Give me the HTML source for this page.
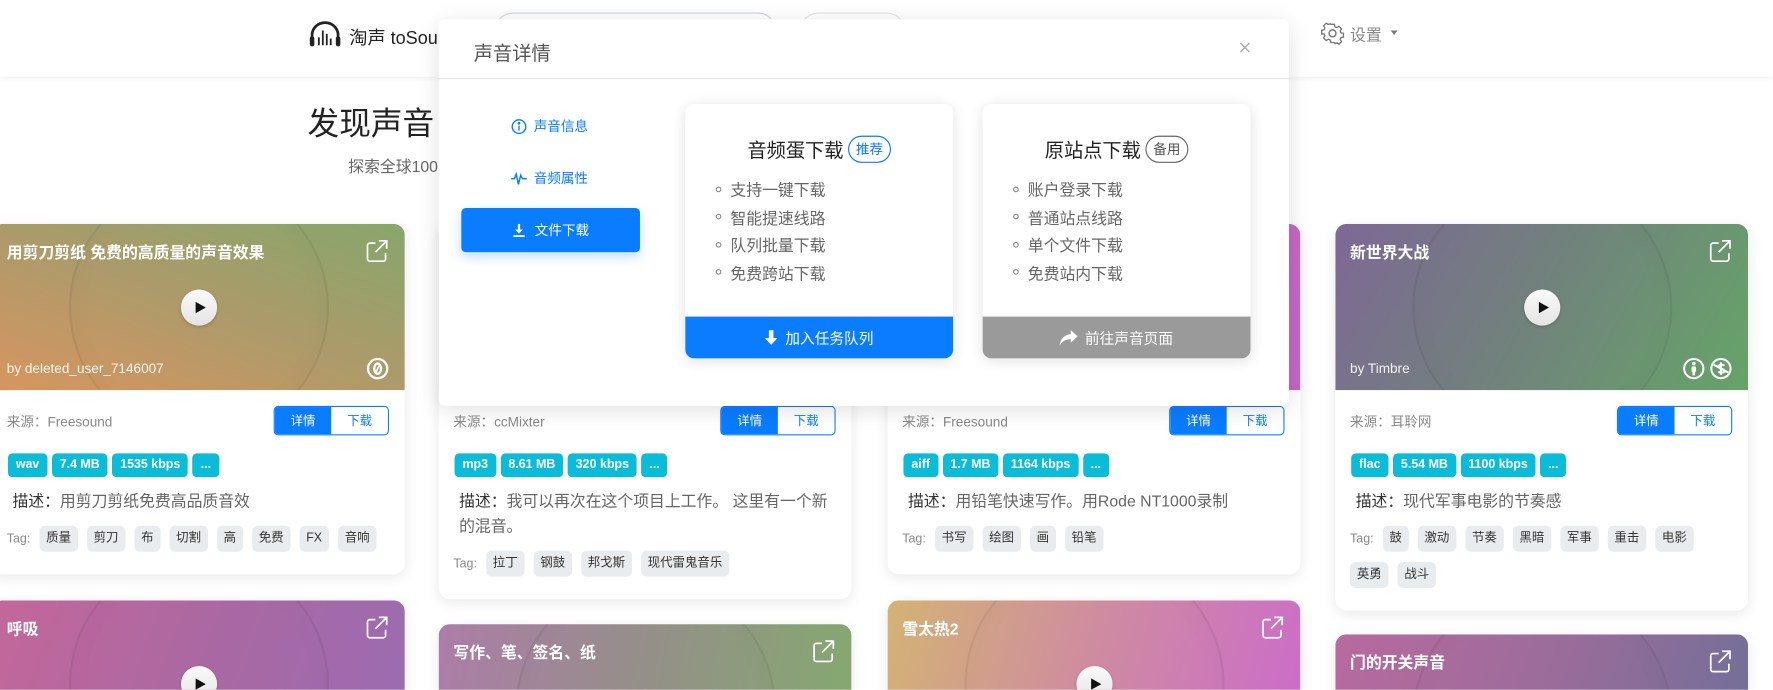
<!DOCTYPE html>
<html><head><meta charset="utf-8">
<style>
*{box-sizing:border-box;margin:0;padding:0}
html,body{width:1773px;height:689px;overflow:hidden;background:#fff}
body{font-family:"Liberation Sans","Noto Sans CJK SC",sans-serif;color:#333}
#w{position:absolute;left:0;top:0;width:1568px;height:610px;transform:scale(1.1307);transform-origin:0 0;background:#fff;overflow:hidden}
.abs{position:absolute}
.hdr{left:0;top:0;width:1568px;height:68px;background:#fff;box-shadow:0 1px 4px rgba(0,0,0,.07)}
.card{position:absolute;width:365px;background:#fff;border-radius:10px;box-shadow:0 3px 12px rgba(0,0,0,.09);overflow:hidden}
.img{position:relative;height:147px;overflow:hidden}
.img .disc{position:absolute;left:50%;top:50%;width:230px;height:230px;margin:-115px 0 0 -115px;border-radius:50%;border:2px solid rgba(0,0,0,.06);background:radial-gradient(circle,rgba(255,255,255,0) 60%,rgba(0,0,0,.04) 100%)}
.img .ttl{position:absolute;left:13px;top:15px;color:#fff;font-weight:bold;font-size:14px;line-height:20px}
.img .by{position:absolute;left:13px;top:121px;color:rgba(255,255,255,.9);font-size:12px}
.img .ext{position:absolute;right:14px;top:14px}
.img .play{position:absolute;left:50%;top:50%;width:32px;height:32px;margin:-16px 0 0 -16px;border-radius:50%;background:linear-gradient(#fafafa,#e4e4e4);box-shadow:0 1px 3px rgba(0,0,0,.2)}
.img .play:after{content:"";position:absolute;left:13px;top:11px;border-left:9px solid #111;border-top:5px solid transparent;border-bottom:5px solid transparent}
.lic{position:absolute;top:118px;right:14px;display:flex;gap:4px}
.bd{padding:14px 14px 20px 13px}
.r1{display:flex;justify-content:space-between;align-items:center;height:26px}
.src{font-size:12px;color:#888}
.bg{display:flex;border:1px solid #0a7cff;border-radius:4px;overflow:hidden;height:26px;width:102px}
.bg span{flex:1;font-size:11px;display:flex;align-items:center;justify-content:center}
.bg .a{background:#0a7cff;color:#fff}.bg .b{color:#0a7cff;background:#fff}
.chips{display:flex;gap:4px;margin-top:16px;margin-left:1px}
.chips span{background:#0bbcd8;color:#fff;font-weight:bold;font-size:11px;height:21px;line-height:21px;padding:0 7px;border-radius:4px}
.desc{margin-top:10px;padding-left:5px;font-size:14px;line-height:22px;color:#666}
.desc b{font-weight:normal;color:#333}
.tags{margin-top:11px;display:flex;flex-wrap:wrap;gap:9px 8px;align-items:center;font-size:11px}
.tags .t{color:#888;margin-right:0}
.tags span.p{background:#e9ecef;border-radius:5px;height:23px;line-height:23px;padding:0 6px;color:#333}
.modal{left:388px;top:17px;width:752px;height:342px;background:#fff;border-radius:6px;box-shadow:0 4px 20px rgba(0,0,0,.12)}
.mh{height:53px;border-bottom:1px solid #e5e5e5;position:relative}
.nav{position:absolute;font-size:12px;color:#0a7cff;display:flex;align-items:center;gap:6px}
.dc{position:absolute;top:75px;width:237px;height:225px;background:#fff;border-radius:8px;box-shadow:0 2px 12px rgba(0,0,0,.12);overflow:hidden}
.dc h3{position:absolute;top:27px;left:0;width:100%;text-align:center;font-weight:normal;font-size:17px;color:#222;display:flex;justify-content:center;align-items:center;gap:4px}
.pill{font-size:12px;border:1px solid;border-radius:14px;padding:0 6px;height:24px;line-height:22px}
.dc ul{position:absolute;left:27px;top:64px;list-style:none}
.dc li{font-size:14px;color:#666;height:24.5px;line-height:24.5px}
.dc li:before{content:"";display:inline-block;width:3px;height:3px;border:1px solid #888;border-radius:50%;margin-right:8px;vertical-align:middle;position:relative;top:-2px}
.bar{position:absolute;left:0;bottom:0;width:100%;height:37px;color:#fff;font-size:13px;display:flex;align-items:center;justify-content:center;gap:6px}
</style></head><body><div id="w">

<div class="abs hdr">
  <svg class="abs" style="left:273px;top:18px" width="29" height="24" viewBox="0 0 29 24"><path d="M3 18 V13 A11.5 11 0 0 1 26 13 V18" fill="none" stroke="#222" stroke-width="2.4"/><rect x="1" y="14" width="4" height="9" rx="2" fill="#222"/><rect x="24" y="14" width="4" height="9" rx="2" fill="#222"/><g stroke="#222" stroke-width="1.6"><line x1="9" y1="15" x2="9" y2="22"/><line x1="12.5" y1="9" x2="12.5" y2="22"/><line x1="16" y1="12" x2="16" y2="22"/><line x1="19.5" y1="16" x2="19.5" y2="22"/></g></svg>
  <div class="abs" style="left:309px;top:20px;font-size:16px;color:#222">淘声 toSound</div>
  <div class="abs" style="left:437px;top:11px;width:250px;height:34px;border:1px solid #c9d6e2;border-radius:17px"></div>
  <div class="abs" style="left:707px;top:11px;width:94px;height:34px;border:1px solid #e3e3e3;border-radius:17px"></div>
  <svg class="abs" style="left:1168px;top:19px" width="21" height="21" viewBox="0 0 24 24" fill="none" stroke="#777" stroke-width="1.5"><path d="M10 2h4l.6 2.7 2 .9 2.4-1.4 2.8 2.8-1.4 2.4.9 2 2.7.6v4l-2.7.6-.9 2 1.4 2.4-2.8 2.8-2.4-1.4-2 .9L14 22h-4l-.6-2.7-2-.9-2.4 1.4-2.8-2.8 1.4-2.4-.9-2L0 12.6v-4l2.7-.6.9-2-1.4-2.4L5 .8l2.4 1.4 2-.9z" transform="translate(1 1) scale(.92)"/><circle cx="12" cy="12" r="3.5"/></svg>
  <div class="abs" style="left:1194px;top:21px;font-size:14px;color:#888">设置</div>
  <div class="abs" style="left:1230px;top:27px;border-top:4px solid #777;border-left:3.5px solid transparent;border-right:3.5px solid transparent"></div>
</div>

<div class="abs" style="left:272px;top:88px;font-size:28px;color:#222">发现声音</div>
<div class="abs" style="left:308px;top:137px;font-size:14px;color:#666">探索全球100</div>

<div class="card" style="left:-7px;top:198px">
  <div class="img" style="background:linear-gradient(20deg,#d8955f 0%,#ad9a6a 50%,#87a66b 100%)"><div class="disc"></div><div class="ttl">用剪刀剪纸 免费的高质量的声音效果</div>
  <svg class="ext" width="21" height="21" viewBox="0 0 21 21" fill="none" stroke="#fff" stroke-width="1.5"><path d="M9 3H4a2 2 0 0 0-2 2v12a2 2 0 0 0 2 2h12a2 2 0 0 0 2-2v-5"/><path d="M12 1h7v7M19 1 9 11"/></svg>
  <div class="play"></div><div class="by">by deleted_user_7146007</div>
  <div class="lic"><svg width="20" height="20" viewBox="0 0 20 20"><circle cx="10" cy="10" r="8.5" fill="none" stroke="#fff" stroke-width="2"/><ellipse cx="10" cy="10" rx="3" ry="4.5" fill="none" stroke="#fff" stroke-width="2"/><line x1="8" y1="14" x2="12" y2="6" stroke="#fff" stroke-width="1.5"/></svg></div></div>
  <div class="bd"><div class="r1"><span class="src">来源：Freesound</span><div class="bg"><span class="a">详情</span><span class="b">下载</span></div></div>
  <div class="chips"><span>wav</span><span>7.4 MB</span><span>1535 kbps</span><span>...</span></div>
  <div class="desc"><b>描述：</b>用剪刀剪纸免费高品质音效</div>
  <div class="tags"><span class="t">Tag:</span><span class="p">质量</span><span class="p">剪刀</span><span class="p">布</span><span class="p">切割</span><span class="p">高</span><span class="p">免费</span><span class="p">FX</span><span class="p">音响</span></div></div>
</div>
<div class="card" style="left:-7px;top:531px;height:120px">
  <div class="img" style="background:linear-gradient(110deg,#c4679a 0%,#aa68a2 50%,#9a6cb3 100%)"><div class="disc"></div><div class="ttl">呼吸</div>
  <svg class="ext" width="21" height="21" viewBox="0 0 21 21" fill="none" stroke="#fff" stroke-width="1.5"><path d="M9 3H4a2 2 0 0 0-2 2v12a2 2 0 0 0 2 2h12a2 2 0 0 0 2-2v-5"/><path d="M12 1h7v7M19 1 9 11"/></svg><div class="play"></div></div>
</div>

<div class="card" style="left:388px;top:198px">
  <div class="img" style="background:linear-gradient(110deg,#b077a8,#8aa46c)"><div class="disc"></div></div>
  <div class="bd"><div class="r1"><span class="src">来源：ccMixter</span><div class="bg"><span class="a">详情</span><span class="b">下载</span></div></div>
  <div class="chips"><span>mp3</span><span>8.61 MB</span><span>320 kbps</span><span>...</span></div>
  <div class="desc"><b>描述：</b>我可以再次在这个项目上工作。 这里有一个新的混音。</div>
  <div class="tags"><span class="t">Tag:</span><span class="p">拉丁</span><span class="p">钢鼓</span><span class="p">邦戈斯</span><span class="p">现代雷鬼音乐</span></div></div>
</div>
<div class="card" style="left:388px;top:552px;height:120px">
  <div class="img" style="background:linear-gradient(100deg,#ac7ca8 0%,#949088 50%,#84aa6e 100%)"><div class="disc"></div><div class="ttl">写作、笔、签名、纸</div>
  <svg class="ext" width="21" height="21" viewBox="0 0 21 21" fill="none" stroke="#fff" stroke-width="1.5"><path d="M9 3H4a2 2 0 0 0-2 2v12a2 2 0 0 0 2 2h12a2 2 0 0 0 2-2v-5"/><path d="M12 1h7v7M19 1 9 11"/></svg><div class="play"></div></div>
</div>

<div class="card" style="left:785px;top:198px">
  <div class="img" style="background:linear-gradient(110deg,#b878b0,#c466c8)"><div class="disc"></div></div>
  <div class="bd"><div class="r1"><span class="src">来源：Freesound</span><div class="bg"><span class="a">详情</span><span class="b">下载</span></div></div>
  <div class="chips"><span>aiff</span><span>1.7 MB</span><span>1164 kbps</span><span>...</span></div>
  <div class="desc"><b>描述：</b>用铅笔快速写作。用Rode NT1000录制</div>
  <div class="tags"><span class="t">Tag:</span><span class="p">书写</span><span class="p">绘图</span><span class="p">画</span><span class="p">铅笔</span></div></div>
</div>
<div class="card" style="left:785px;top:531px;height:120px">
  <div class="img" style="background:linear-gradient(105deg,#d4b374 0%,#ce8aa2 50%,#cc6acc 100%)"><div class="disc"></div><div class="ttl">雪太热2</div>
  <svg class="ext" width="21" height="21" viewBox="0 0 21 21" fill="none" stroke="#fff" stroke-width="1.5"><path d="M9 3H4a2 2 0 0 0-2 2v12a2 2 0 0 0 2 2h12a2 2 0 0 0 2-2v-5"/><path d="M12 1h7v7M19 1 9 11"/></svg><div class="play"></div></div>
</div>

<div class="card" style="left:1181px;top:198px">
  <div class="img" style="background:linear-gradient(120deg,#7e6896 0%,#72807e 45%,#66a468 100%)"><div class="disc"></div><div class="ttl">新世界大战</div>
  <svg class="ext" width="21" height="21" viewBox="0 0 21 21" fill="none" stroke="#fff" stroke-width="1.5"><path d="M9 3H4a2 2 0 0 0-2 2v12a2 2 0 0 0 2 2h12a2 2 0 0 0 2-2v-5"/><path d="M12 1h7v7M19 1 9 11"/></svg>
  <div class="play"></div><div class="by">by Timbre</div>
  <div class="lic"><svg width="20" height="20" viewBox="0 0 20 20"><circle cx="10" cy="10" r="8.5" fill="none" stroke="#fff" stroke-width="1.8"/><circle cx="10" cy="5.5" r="1.6" fill="#fff"/><rect x="8" y="8" width="4" height="5" rx="1" fill="#fff"/><rect x="8.8" y="12" width="2.4" height="4" fill="#fff"/></svg><svg width="20" height="20" viewBox="0 0 20 20" fill="none" stroke="#fff" stroke-width="1.8"><circle cx="10" cy="10" r="8.5"/><path d="M13 7.5c-1-1.2-5-1.4-5 .8 0 2.5 5 1.2 5 3.6 0 2.2-4 2-5.2.6M10 4.5v11M3.5 6.5l13 7"/></svg></div></div>
  <div class="bd"><div class="r1"><span class="src">来源：耳聆网</span><div class="bg"><span class="a">详情</span><span class="b">下载</span></div></div>
  <div class="chips"><span>flac</span><span>5.54 MB</span><span>1100 kbps</span><span>...</span></div>
  <div class="desc"><b>描述：</b>现代军事电影的节奏感</div>
  <div class="tags"><span class="t">Tag:</span><span class="p">鼓</span><span class="p">激动</span><span class="p">节奏</span><span class="p">黑暗</span><span class="p">军事</span><span class="p">重击</span><span class="p">电影</span><span class="p">英勇</span><span class="p">战斗</span></div></div>
</div>
<div class="card" style="left:1181px;top:561px;height:120px">
  <div class="img" style="background:linear-gradient(110deg,#b86a9e 0%,#9a6c9a 50%,#6c7098 100%)"><div class="disc"></div><div class="ttl">门的开关声音</div>
  <svg class="ext" width="21" height="21" viewBox="0 0 21 21" fill="none" stroke="#fff" stroke-width="1.5"><path d="M9 3H4a2 2 0 0 0-2 2v12a2 2 0 0 0 2 2h12a2 2 0 0 0 2-2v-5"/><path d="M12 1h7v7M19 1 9 11"/></svg><div class="play"></div></div>
</div>

<div class="abs modal">
  <div class="mh"><div class="abs" style="left:31px;top:16px;font-size:17px;color:#555">声音详情</div>
  <svg class="abs" style="left:708px;top:20px" width="10" height="10" viewBox="0 0 10 10" stroke="#aaa" stroke-width="1.3"><path d="M1 1l8 8M9 1 1 9"/></svg></div>
  <div class="nav" style="left:64px;top:86px"><svg width="14" height="14" viewBox="0 0 14 14" fill="none" stroke="#0a7cff" stroke-width="1.2"><circle cx="7" cy="7" r="6"/><path d="M7 6v4.5"/><circle cx="7" cy="4" r=".6" fill="#0a7cff"/></svg>声音信息</div>
  <div class="nav" style="left:64px;top:132px"><svg width="14" height="14" viewBox="0 0 14 14" fill="none" stroke="#0a7cff" stroke-width="1.3"><path d="M0 7h3l1.5-4 2 9 2-8 1.5 3H14"/></svg>音频属性</div>
  <div class="abs" style="left:20px;top:167px;width:158px;height:39px;background:#0a7cff;border-radius:4px;box-shadow:0 4px 10px rgba(10,124,255,.25);color:#fff;font-size:12px;display:flex;align-items:center;justify-content:center;gap:8px"><svg width="12" height="12" viewBox="0 0 12 12" fill="#fff"><path d="M5 0h2v5h2.5L6 8.5 2.5 5H5z"/><rect x="1" y="10" width="10" height="1.6"/></svg>文件下载</div>

  <div class="dc" style="left:218px"><h3>音频蛋下载<span class="pill" style="color:#0a7cff;border-color:#0a7cff">推荐</span></h3>
  <ul><li>支持一键下载</li><li>智能提速线路</li><li>队列批量下载</li><li>免费跨站下载</li></ul>
  <div class="bar" style="background:#0a7cff"><svg width="12" height="14" viewBox="0 0 12 14" fill="#fff"><path d="M4 0h4v7h3.5L6 13 .5 7H4z"/></svg>加入任务队列</div></div>

  <div class="dc" style="left:481px"><h3>原站点下载<span class="pill" style="color:#555;border-color:#666">备用</span></h3>
  <ul><li>账户登录下载</li><li>普通站点线路</li><li>单个文件下载</li><li>免费站内下载</li></ul>
  <div class="bar" style="background:#9a9a9a"><svg width="16" height="14" viewBox="0 0 16 14" fill="#fff"><path d="M10 0l6 5.5-6 5.5V8C5 8 2 10 0 14 1 8 4 4 10 3.5z"/></svg>前往声音页面</div></div>
</div>

</div></body></html>
